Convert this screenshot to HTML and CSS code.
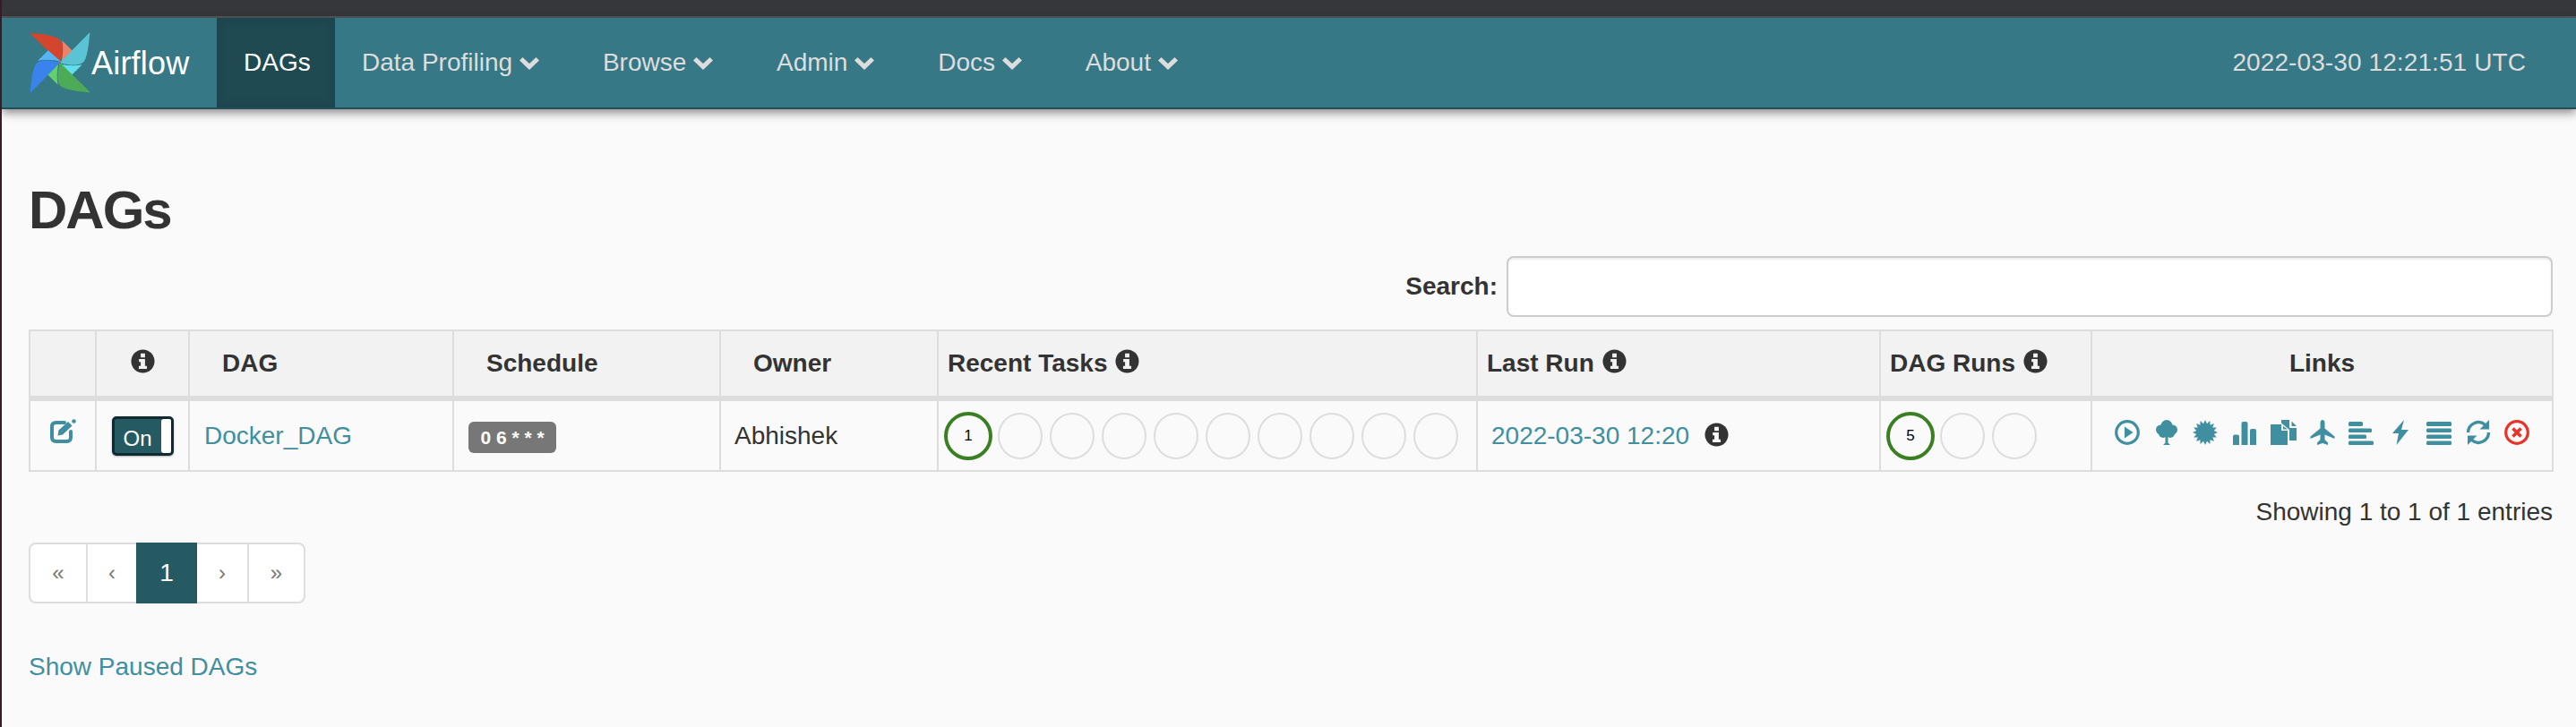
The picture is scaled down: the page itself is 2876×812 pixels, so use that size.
FILE: index.html
```html
<!DOCTYPE html>
<html lang="en">
<head>
<meta charset="utf-8">
<title>DAGs - Airflow</title>
<link rel="stylesheet" href="styles.css">
</head>
<body>
<div class="topbar"></div>
<nav class="navbar">
  <a class="brand" href="#">
    <svg class="logo" viewBox="-103 -103 206 206" aria-hidden="true">
      <g><path fill="#d4452d" d="M-103-101C-70-98-25-94-5-82 10-72 12-40 0 0Z"/><path fill="#ef8167" d="M7-75 42-40 3 4C10-20 12-50 7-75Z"/></g>
      <g transform="rotate(90)"><path fill="#5ac4d5" d="M-103-101C-70-98-25-94-5-82 10-72 12-40 0 0Z"/><path fill="#62dfee" d="M7-75 42-40 3 4C10-20 12-50 7-75Z"/></g>
      <g transform="rotate(180)"><path fill="#4dab57" d="M-103-101C-70-98-25-94-5-82 10-72 12-40 0 0Z"/><path fill="#63d068" d="M7-75 42-40 3 4C10-20 12-50 7-75Z"/></g>
      <g transform="rotate(270)"><path fill="#3b83ec" d="M-103-101C-70-98-25-94-5-82 10-72 12-40 0 0Z"/><path fill="#55b5f5" d="M7-75 42-40 3 4C10-20 12-50 7-75Z"/></g>
    </svg>
    <span class="brand-text">Airflow</span>
  </a>
  <ul class="nav-list">
    <li><a class="nav-link active" href="#">DAGs</a></li>
    <li><a class="nav-link" href="#">Data Profiling <svg class="chev" viewBox="0 0 22 14"><polygon points="3.5,0 11,7 18.5,0 22,3.5 11,14 0,3.5"/></svg></a></li>
    <li><a class="nav-link" href="#">Browse <svg class="chev" viewBox="0 0 22 14"><polygon points="3.5,0 11,7 18.5,0 22,3.5 11,14 0,3.5"/></svg></a></li>
    <li><a class="nav-link" href="#">Admin <svg class="chev" viewBox="0 0 22 14"><polygon points="3.5,0 11,7 18.5,0 22,3.5 11,14 0,3.5"/></svg></a></li>
    <li><a class="nav-link" href="#">Docs <svg class="chev" viewBox="0 0 22 14"><polygon points="3.5,0 11,7 18.5,0 22,3.5 11,14 0,3.5"/></svg></a></li>
    <li><a class="nav-link" href="#">About <svg class="chev" viewBox="0 0 22 14"><polygon points="3.5,0 11,7 18.5,0 22,3.5 11,14 0,3.5"/></svg></a></li>
  </ul>
  <div class="clock">2022-03-30 12:21:51 UTC</div>
</nav>
<main class="content">
  <h1 class="title">DAGs</h1>
  <div class="search-row">
    <label class="search-label" for="q">Search:</label>
    <input class="search-input" id="q" type="search">
  </div>
  <table class="dags">
    <colgroup>
      <col class="w-a"><col class="w-b"><col class="w-c"><col class="w-d"><col class="w-e"><col class="w-f"><col class="w-g"><col class="w-h"><col class="w-i">
    </colgroup>
    <thead>
      <tr>
        <th></th>
        <th class="center"><svg class="info raised" viewBox="0 0 28 28"><circle cx="14" cy="14" r="13.5" fill="#333"/><path fill="#f2f2f2" d="M11.5 5h5v4.5h-5zM9.5 11.5h7v8h2.2v3.2H9.3v-3.2h2.2v-4.8h-2z"/></svg></th>
        <th class="pad-l">DAG</th>
        <th class="pad-l">Schedule</th>
        <th class="pad-l">Owner</th>
        <th class="pad-s">Recent Tasks <svg class="info raised" viewBox="0 0 28 28"><circle cx="14" cy="14" r="13.5" fill="#333"/><path fill="#f2f2f2" d="M11.5 5h5v4.5h-5zM9.5 11.5h7v8h2.2v3.2H9.3v-3.2h2.2v-4.8h-2z"/></svg></th>
        <th class="pad-s">Last Run <svg class="info raised" viewBox="0 0 28 28"><circle cx="14" cy="14" r="13.5" fill="#333"/><path fill="#f2f2f2" d="M11.5 5h5v4.5h-5zM9.5 11.5h7v8h2.2v3.2H9.3v-3.2h2.2v-4.8h-2z"/></svg></th>
        <th class="pad-s">DAG Runs <svg class="info raised" viewBox="0 0 28 28"><circle cx="14" cy="14" r="13.5" fill="#333"/><path fill="#f2f2f2" d="M11.5 5h5v4.5h-5zM9.5 11.5h7v8h2.2v3.2H9.3v-3.2h2.2v-4.8h-2z"/></svg></th>
        <th class="center">Links</th>
      </tr>
    </thead>
    <tbody>
      <tr>
        <td class="center"><svg class="edit" viewBox="0 0 29 27"><path fill="none" stroke="#408fa0" stroke-width="4" stroke-linecap="round" d="M16 4H6.5Q2 4 2 8.5v12Q2 25 6.5 25h12q4.5 0 4.5-4.5V14"/><path fill="#408fa0" d="M9.500 12.500 20 3l4.500 4.500L14 17.500l-5.500 1z"/><circle cx="26.500" cy="2.500" r="2.300" fill="#408fa0"/></svg></td>
        <td class="center"><span class="switch"><span class="switch-on">On</span><span class="switch-knob"></span></span></td>
        <td class="pad-dag"><a class="link" href="#">Docker_DAG</a></td>
        <td class="pad-cron"><span class="cron">0 6 * * *</span></td>
        <td class="pad-m">Abhishek</td>
        <td class="pad-c"><div class="circles"><span class="circle ok">1</span><span class="circle"></span><span class="circle"></span><span class="circle"></span><span class="circle"></span><span class="circle"></span><span class="circle"></span><span class="circle"></span><span class="circle"></span><span class="circle"></span></div></td>
        <td class="pad-m"><div class="lastrun"><a class="link" href="#">2022-03-30 12:20</a><svg class="info" viewBox="0 0 28 28"><circle cx="14" cy="14" r="13.500" fill="#333"/><path fill="#fafafa" d="M11.500 5h5v4.500h-5zM9.500 11.500h7v8h2.200v3.200H9.300v-3.200h2.200v-4.800h-2z"/></svg></div></td>
        <td class="pad-c"><div class="circles"><span class="circle ok">5</span><span class="circle"></span><span class="circle"></span></div></td>
        <td>
          <div class="links">
            <svg class="ico" viewBox="0 0 28 28"><circle cx="14" cy="14" r="12.300" fill="none" stroke="#408fa0" stroke-width="3.200"/><polygon fill="#408fa0" points="11,7.500 20.500,14 11,20.500"/></svg>
            <svg class="ico" viewBox="0 0 28 28"><g fill="#408fa0"><circle cx="14" cy="6.500" r="6.500"/><circle cx="7.500" cy="11" r="5.500"/><circle cx="20.500" cy="11" r="5.500"/><circle cx="10" cy="15" r="5"/><circle cx="18" cy="15" r="5"/><path d="M12.500 15h3v10.500l2.500 2.500h-8l2.500-2.500z"/></g></svg>
            <svg class="ico" viewBox="0 0 28 28"><polygon fill="#408fa0" points="14,0 16,4.200 19.400,1.100 19.600,5.700 23.900,4.100 22.300,8.400 26.900,8.600 23.800,12 28,14 23.800,16 26.900,19.400 22.300,19.600 23.900,23.900 19.600,22.300 19.400,26.900 16,23.800 14,28 12,23.800 8.600,26.900 8.400,22.300 4.100,23.900 5.700,19.600 1.100,19.400 4.200,16 0,14 4.200,12 1.100,8.600 5.700,8.400 4.100,4.100 8.400,5.700 8.600,1.100 12,4.200"/></svg>
            <svg class="ico" viewBox="0 0 28 28"><g fill="#408fa0"><path d="M1 28V18.500a2 2 0 0 1 2-2h3a2 2 0 0 1 2 2V28z"/><path d="M10.500 28V4a2 2 0 0 1 2-2h3a2 2 0 0 1 2 2v24z"/><path d="M20 28V12a2 2 0 0 1 2-2h3a2 2 0 0 1 2 2v16z"/></g></svg>
            <svg class="ico" viewBox="0 0 28 28"><g fill="#408fa0"><polygon points="0,5 12,5 12,12 19,12 19,28 0,28"/><polygon points="12,0 21,0 21,9 29,9 29,23 21,23 21,11 12,3.500"/><polygon points="14,7 19,10.500 14,10.500"/><polygon points="23.500,1.500 29,7 23.500,7"/></g></svg>
            <svg class="ico" viewBox="0 0 28 28"><path fill="#408fa0" d="M14 0C12.500 0 11.500 1.500 11.500 3.500V9.500L.5 18.500V21L11.500 16.500V22L8 25.500V28L14 26 20 28V25.500L16.500 22V16.500L27.500 21V18.500L16.500 9.500V3.500C16.500 1.500 15.500 0 14 0Z"/></svg>
            <svg class="ico" viewBox="0 0 28 28"><g fill="#408fa0"><rect x="0" y="2" width="16" height="5" rx="1.500"/><rect x="0" y="9.500" width="26" height="4.500" rx="1.500"/><rect x="0" y="16.500" width="20" height="4.500" rx="1.500"/><rect x="0" y="23.500" width="28" height="4.500" rx="1.500"/></g></svg>
            <svg class="ico" viewBox="0 0 28 28"><polygon fill="#408fa0" points="18,0 5,15 12,15 9.500,28 23,11 15,11"/></svg>
            <svg class="ico" viewBox="0 0 28 28"><g fill="#408fa0"><rect x="0" y="2" width="28" height="5" rx="1.500"/><rect x="0" y="9.500" width="28" height="4.500" rx="1.500"/><rect x="0" y="16.500" width="28" height="4.500" rx="1.500"/><rect x="0" y="23.500" width="28" height="4.500" rx="1.500"/></g></svg>
            <svg class="ico" viewBox="0 0 28 28"><g fill="none" stroke="#408fa0" stroke-width="3.400"><path d="M2.500 14A11.500 11.500 0 0 1 21.500 5.500"/><path d="M25.500 14A11.500 11.500 0 0 1 6.500 22.500"/></g><polygon fill="#408fa0" points="26,0 26,10.500 15.500,10.500"/><polygon fill="#408fa0" points="2,17.500 12.500,17.500 2,28"/></svg>
            <svg class="ico" viewBox="0 0 28 28"><circle cx="14" cy="14" r="12.300" fill="none" stroke="#e8332a" stroke-width="3.200"/><path fill="none" stroke="#e8332a" stroke-width="3.600" d="M9.500 9.500l9 9M18.500 9.500l-9 9"/></svg>
          </div>
        </td>
      </tr>
    </tbody>
  </table>
  <div class="entries">Showing 1 to 1 of 1 entries</div>
  <ul class="pagination">
    <li class="page first">«</li>
    <li class="page prev">‹</li>
    <li class="page current">1</li>
    <li class="page next">›</li>
    <li class="page last">»</li>
  </ul>
  <a class="link paused" href="#">Show Paused DAGs</a>
</main>
</body>
</html>
```
FILE: styles.css
```css
* { box-sizing: border-box; }
html, body { margin: 0; padding: 0; }
body {
  width: 2876px;
  height: 812px;
  overflow: hidden;
  background: #fafafa;
  color: #333;
  font-family: "Liberation Sans", Arial, sans-serif;
  font-size: 28px;
  line-height: 40px;
  border-left: 2px solid #3a1a26;
}
.topbar {
  height: 20px;
  background: #36373b;
  border-bottom: 2px solid #55575a;
}
.navbar {
  display: flex;
  align-items: stretch;
  height: 102px;
  background: #367885;
  border-bottom: 2px solid #1f4f57;
  box-shadow: 0 4px 10px rgba(0, 0, 0, .45);
  position: relative;
}
.brand {
  display: flex;
  align-items: center;
  width: 240px;
  padding-left: 31px;
  color: #fff;
  text-decoration: none;
}
.logo { width: 68px; height: 68px; flex: none; }
.brand-text { font-size: 36px; margin-left: 1px; margin-top: 2px; letter-spacing: .2px; }
.nav-list {
  display: flex;
  list-style: none;
  margin: 0;
  padding: 0;
}
.nav-link {
  display: flex;
  align-items: center;
  height: 100px;
  padding: 0 30px;
  color: #ddd;
  text-decoration: none;
  white-space: pre;
}
.nav-link.active {
  width: 132px;
  color: #fff;
  background: #1f4a52;
  box-shadow: inset 0 0 14px rgba(0, 0, 0, .12);
}
.chev { width: 22px; height: 14px; margin: 2px 11px 0 0; fill: #ddd; }
.clock {
  margin-left: auto;
  align-self: center;
  padding-right: 56px;
  color: #ddd;
  letter-spacing: .1px;
}
.content { padding: 0 0 0 30px; }
.title {
  margin: 80px 0 18px;
  font-size: 60px;
  line-height: 66px;
  font-weight: bold;
  letter-spacing: -2px;
  color: #333;
}
.search-row {
  display: flex;
  justify-content: flex-end;
  align-items: center;
  gap: 10px;
  width: 2818px;
  height: 68px;
  margin-bottom: 14px;
}
.search-label { font-weight: bold; }
.search-input {
  width: 1168px;
  height: 68px;
  background: #fff;
  border: 2px solid #ccc;
  border-radius: 8px;
  box-shadow: inset 0 2px 2px rgba(0, 0, 0, .07);
}
.dags {
  table-layout: fixed;
  border-collapse: collapse;
  width: 2819px;
}
.w-a { width: 74px; }
.w-b { width: 104px; }
.w-c { width: 295px; }
.w-d { width: 298px; }
.w-e { width: 243px; }
.w-f { width: 602px; }
.w-g { width: 450px; }
.w-h { width: 236px; }
.w-i { width: 515px; }
.dags th, .dags td {
  border: 2px solid #ddd;
  padding: 0;
  vertical-align: middle;
  text-align: left;
}
.dags th {
  height: 76px;
  background: #f2f2f2;
  border-bottom: 6px solid #ddd;
  font-weight: bold;
}
.dags td { height: 81px; }
.dags .center { text-align: center; }
.dags .pad-l { padding-left: 36px; }
.dags .pad-s { padding-left: 10px; }
.dags .pad-m { padding-left: 15px; }
.dags .pad-dag { padding-left: 16px; }
.dags .pad-cron { padding-left: 16px; }
.dags .pad-c { padding-left: 6px; }
.info { width: 27px; height: 27px; vertical-align: -3px; }
.info.raised { position: relative; top: -1px; margin-left: 1px; }
.edit { width: 29px; height: 27px; display: block; margin: -11px auto 0 auto; }
.switch {
  display: inline-flex;
  width: 69px;
  height: 44px;
  background: #265a62;
  border: 3px solid #0f2a30;
  border-radius: 5px;
  vertical-align: middle;
  box-shadow: 0 1px 2px rgba(0, 0, 0, .3);
  overflow: hidden;
}
.switch-on {
  flex: 1;
  color: #fff;
  font-size: 24px;
  line-height: 44px;
  text-align: center;
}
.switch-knob { width: 11px; background: #fff; border-radius: 3px 0 0 3px; }
.link { color: #408fa0; text-decoration: none; }
.cron {
  display: inline-block;
  width: 98px;
  height: 35px;
  background: #777;
  color: #fff;
  border-radius: 6px;
  font-size: 21px;
  font-weight: bold;
  line-height: 35px;
  text-align: center;
  white-space: pre;
  vertical-align: middle;
}
.circles { display: flex; gap: 4px; }
.circle {
  display: flex;
  align-items: center;
  justify-content: center;
  flex: none;
  width: 50px;
  height: 52px;
  margin: 1px 2px;
  border: 2px solid #ddd;
  border-radius: 50%;
  font-size: 17px;
  color: #000;
}
.circle.ok {
  width: 54px;
  height: 54px;
  margin: 0;
  border: 4px solid #3a8022;
}
.lastrun { display: flex; align-items: center; gap: 17px; }
.lastrun .info { margin-top: -2px; }
.links {
  display: flex;
  justify-content: center;
  gap: 15.5px;
  margin-top: -8px;
}
.ico { width: 28px; height: 28px; flex: none; overflow: visible; }
.entries {
  width: 2818px;
  margin-top: 25px;
  text-align: right;
  color: #333;
}
.pagination {
  display: flex;
  list-style: none;
  margin: 14px 0 0;
  padding: 0;
}
.page {
  height: 68px;
  margin-left: -2px;
  background: #fff;
  border: 2px solid #ddd;
  color: #777;
  font-size: 24px;
  line-height: 64px;
  text-align: center;
}
.first { margin-left: 0; border-radius: 8px 0 0 8px; width: 66px; }
.prev { width: 58px; }
.next { width: 60px; }
.last { border-radius: 0 8px 8px 0; width: 65px; }
.page.current {
  width: 68px;
  background: #265a62;
  border-color: #265a62;
  color: #fff;
  font-size: 28px;
  position: relative;
}
.paused { display: block; width: max-content; margin-top: 51px; }
```
